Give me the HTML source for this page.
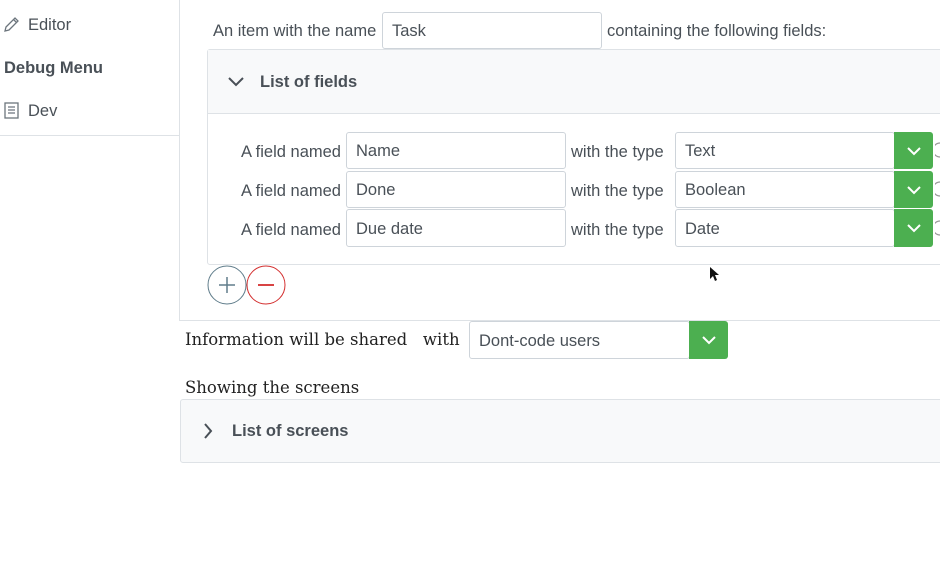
<!DOCTYPE html>
<html><head><style>
*{box-sizing:border-box;margin:0;padding:0}
body{width:940px;height:581px;overflow:hidden;background:#fff;font-family:"Liberation Sans",sans-serif;color:#495057;position:relative}
.a{position:absolute}
.inp{position:absolute;border:1px solid #ced4da;border-radius:3px;background:#fff;font-size:16.5px;padding-left:9px;padding-top:2px;display:flex;align-items:center;color:#495057}
.grn{position:absolute;background:#4caf50;border-radius:0 3px 3px 0;display:flex;align-items:center;justify-content:center}
.t{position:absolute;font-size:16.5px;white-space:nowrap}
.serif{font-family:"DejaVu Serif",serif;color:#222;font-size:16.5px}
</style></head><body>
<div class="a" style="left:179px;top:0;width:1px;height:320px;background:#dee2e6"></div>
<div class="a" style="left:179px;top:320px;width:761px;height:1px;background:#dee2e6"></div>
<div class="a" style="left:0;top:135px;width:179px;height:1px;background:#dee2e6"></div>
<svg class="a" style="left:3px;top:16px" width="17" height="17" viewBox="0 0 17 17"><path d="M2 15 L3 11 L12 2 L15 5 L6 14 Z M10.5 3.5 L13.5 6.5" fill="none" stroke="#6c757d" stroke-width="1.3"/></svg>
<div class="t" style="left:28px;top:16px">Editor</div>
<div class="t" style="left:4px;top:59px;font-weight:bold;color:#495057">Debug Menu</div>
<svg class="a" style="left:4px;top:102px" width="15" height="17" viewBox="0 0 15 17"><rect x="1" y="1" width="13" height="15" fill="none" stroke="#6c757d" stroke-width="1.3"/><path d="M4 5h7M4 8h7M4 11h7" stroke="#6c757d" stroke-width="1.2"/></svg>
<div class="t" style="left:28px;top:102px">Dev</div>

<div class="t" style="left:213px;top:22px">An item with the name</div>
<div class="inp" style="left:382px;top:12px;width:220px;height:37px">Task</div>
<div class="t" style="left:607px;top:22px">containing the following fields:</div>

<div class="a" style="left:207px;top:49px;width:740px;height:216px;border:1px solid #dee2e6;border-radius:3px"></div>
<div class="a" style="left:208px;top:50px;width:732px;height:64px;background:#f8f9fa;border-bottom:1px solid #dee2e6"></div>
<svg class="a" style="left:228px;top:77px" width="16" height="10" viewBox="0 0 16 10"><path d="M1 1 L8 8 L15 1" fill="none" stroke="#495057" stroke-width="2"/></svg>
<div class="t" style="left:260px;top:73px;font-weight:bold;color:#495057">List of fields</div>

<div class="t" style="left:241px;top:143px">A field named</div>
<div class="inp" style="left:346px;top:132px;width:220px;height:37px">Name</div>
<div class="t" style="left:571px;top:143px">with the type</div>
<div class="inp" style="left:675px;top:132px;width:220px;height:37px">Text</div>
<div class="grn" style="left:894px;top:132px;width:39px;height:37px"><svg width="16" height="10" viewBox="0 0 16 10"><path d="M2 2 L8 8 L14 2" fill="none" stroke="#fff" stroke-width="2"/></svg></div>

<div class="t" style="left:241px;top:182px">A field named</div>
<div class="inp" style="left:346px;top:171px;width:220px;height:37px">Done</div>
<div class="t" style="left:571px;top:182px">with the type</div>
<div class="inp" style="left:675px;top:171px;width:220px;height:37px">Boolean</div>
<div class="grn" style="left:894px;top:171px;width:39px;height:37px"><svg width="16" height="10" viewBox="0 0 16 10"><path d="M2 2 L8 8 L14 2" fill="none" stroke="#fff" stroke-width="2"/></svg></div>

<div class="t" style="left:241px;top:221px">A field named</div>
<div class="inp" style="left:346px;top:209px;width:220px;height:38px">Due date</div>
<div class="t" style="left:571px;top:221px">with the type</div>
<div class="inp" style="left:675px;top:209px;width:220px;height:38px">Date</div>
<div class="grn" style="left:894px;top:209px;width:39px;height:38px"><svg width="16" height="10" viewBox="0 0 16 10"><path d="M2 2 L8 8 L14 2" fill="none" stroke="#fff" stroke-width="2"/></svg></div>
<svg class="a" style="left:935px;top:140px" width="5" height="100" viewBox="0 0 5 100"><path d="M5 3 A7 7 0 0 0 5 17 M5 42 A7 7 0 0 0 5 56 M5 81 A7 7 0 0 0 5 95" fill="none" stroke="#999" stroke-width="1.3"/></svg>

<svg class="a" style="left:207px;top:265px" width="80" height="40" viewBox="0 0 80 40"><circle cx="20" cy="20" r="19" fill="#fff" stroke="#607d8b" stroke-width="1"/><path d="M20 12v16M12 20h16" stroke="#607d8b" stroke-width="1.5"/><circle cx="59" cy="20" r="19" fill="#fff" stroke="#d32f2f" stroke-width="1"/><path d="M51 20h16" stroke="#d32f2f" stroke-width="1.8"/></svg>

<div class="t serif" style="left:185px;top:330px">Information will be shared&nbsp;&nbsp; with</div>
<div class="inp" style="left:469px;top:321px;width:221px;height:38px">Dont-code users</div>
<div class="grn" style="left:689px;top:321px;width:39px;height:38px"><svg width="16" height="10" viewBox="0 0 16 10"><path d="M2 2 L8 8 L14 2" fill="none" stroke="#fff" stroke-width="2"/></svg></div>

<div class="t serif" style="left:185px;top:378px">Showing the screens</div>
<div class="a" style="left:180px;top:399px;width:770px;height:64px;background:#f8f9fa;border:1px solid #dee2e6;border-radius:3px"></div>
<svg class="a" style="left:203px;top:423px" width="10" height="16" viewBox="0 0 10 16"><path d="M2 1 L8 8 L2 15" fill="none" stroke="#495057" stroke-width="2"/></svg>
<div class="t" style="left:232px;top:422px;font-weight:bold;color:#495057">List of screens</div>
<svg class="a" style="left:709px;top:266px" width="10" height="16" viewBox="0 0 10 16"><path d="M1 1 L1 13 L4 10 L6 15 L8 14 L6 9 L10 9 Z" fill="#111"/></svg>
</body></html>
